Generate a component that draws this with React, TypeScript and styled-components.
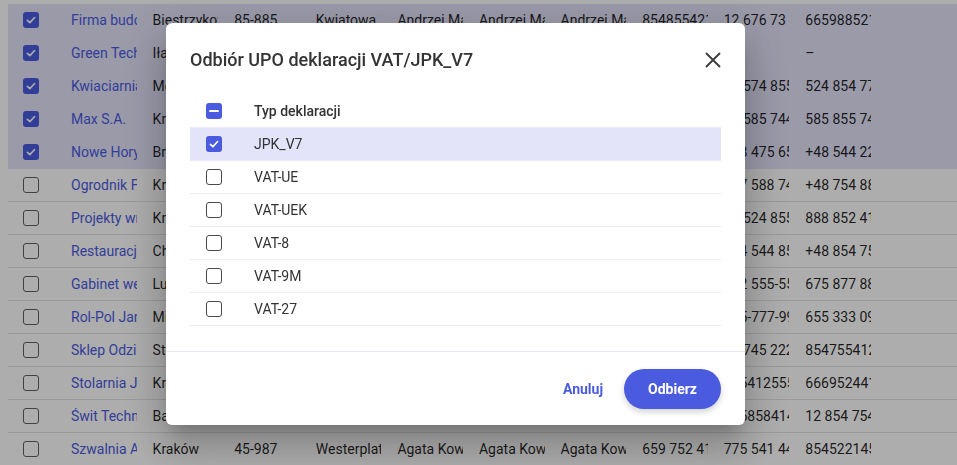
import styled, { createGlobalStyle } from "styled-components";

const primary = "#4b5be0";
const selectedBg = "#e3e3fa";

const GlobalStyle = createGlobalStyle`
  * {
    box-sizing: border-box;
  }

  body {
    margin: 0;
    background: #ffffff;
    font-family: Roboto, "Liberation Sans", Arial, sans-serif;
    color: rgba(0, 0, 0, 0.87);
  }
`;

type Company = {
  selected: boolean;
  name: string;
  city: string;
  zip: string;
  street: string;
  person: string;
  phone1: string;
  phone2: string;
  phone3: string;
};

const companies: Company[] = [
  { selected: true, name: "Firma budowlana", city: "Biestrzykowice", zip: "85-885", street: "Kwiatowa 15", person: "Andrzej Malinowski", phone1: "854855421", phone2: "12 676 73 22", phone3: "665988521" },
  { selected: true, name: "Green Tech", city: "Iława", zip: "14-200", street: "Leśna 4", person: "Marek Zieliński", phone1: "745 112 300", phone2: "–", phone3: "–" },
  { selected: true, name: "Kwiaciarnia Róża", city: "Mosina", zip: "62-050", street: "Polna 8", person: "Ewa Nowak", phone1: "612 455 871", phone2: "22 574 855 1", phone3: "524 854 771" },
  { selected: true, name: "Max S.A.", city: "Kraków", zip: "30-001", street: "Długa 21", person: "Piotr Wójcik", phone1: "585 744 120", phone2: "48 585 744 1", phone3: "585 855 741" },
  { selected: true, name: "Nowe Horyzonty", city: "Brzeg", zip: "49-300", street: "Opolska 3", person: "Anna Lis", phone1: "774 112 980", phone2: "+48 475 651", phone3: "+48 544 221" },
  { selected: false, name: "Ogrodnik Franciszek", city: "Kraków", zip: "31-222", street: "Ogrodowa 7", person: "Franciszek Mazur", phone1: "124 558 741", phone2: "627 588 741", phone3: "+48 754 881" },
  { selected: false, name: "Projekty wnętrz", city: "Kraków", zip: "30-410", street: "Zielona 2", person: "Olga Kruk", phone1: "126 524 851", phone2: "12 524 855", phone3: "888 852 411" },
  { selected: false, name: "Restauracja Smak", city: "Chełm", zip: "22-100", street: "Lwowska 11", person: "Jan Sowa", phone1: "825 544 851", phone2: "754 544 855", phone3: "+48 854 751" },
  { selected: false, name: "Gabinet weterynaryjny", city: "Lublin", zip: "20-001", street: "Krótka 5", person: "Maria Bąk", phone1: "815 555 552", phone2: "502 555-555", phone3: "675 877 881" },
  { selected: false, name: "Rol-Pol Jan Kowalski", city: "Mielec", zip: "39-300", street: "Polna 14", person: "Jan Kowalski", phone1: "177 777 999", phone2: "555-777-999", phone3: "655 333 091" },
  { selected: false, name: "Sklep Odzieżowy", city: "Starogard", zip: "83-200", street: "Rynek 9", person: "Ewa Kaczmarek", phone1: "585 745 221", phone2: "24 745 222", phone3: "854755412" },
  { selected: false, name: "Stolarnia Jan", city: "Kraków", zip: "31-540", street: "Tartaczna 6", person: "Jan Stolarz", phone1: "124 541 255", phone2: "585412555", phone3: "666952441" },
  { selected: false, name: "Świt Technologie", city: "Bartoszyce", zip: "11-200", street: "Słoneczna 1", person: "Adam Świt", phone1: "895 858 414", phone2: "665858414", phone3: "12 854 754" },
  { selected: false, name: "Szwalnia Anna", city: "Kraków", zip: "45-987", street: "Westerplatte 3", person: "Agata Kowalska", phone1: "659 752 411", phone2: "775 541 441", phone3: "854522145" },
];

const declarations = [
  { label: "JPK_V7", checked: true },
  { label: "VAT-UE", checked: false },
  { label: "VAT-UEK", checked: false },
  { label: "VAT-8", checked: false },
  { label: "VAT-9M", checked: false },
  { label: "VAT-27", checked: false },
];

/* background list */

const Page = styled.div`
  padding: 4px 0 0 8px;
`;

const TableRow = styled.div<{ $selected?: boolean }>`
  display: grid;
  grid-template-columns: 55px repeat(10, 81.6px) 1fr;
  align-items: center;
  height: 33px;
  font-size: 14px;
  background: ${(p) => (p.$selected ? selectedBg : "transparent")};
  border-bottom: 1px solid ${(p) => (p.$selected ? "transparent" : "#e2e2e2")};
`;

const CheckCell = styled.div`
  display: flex;
  align-items: center;
  padding-left: 15px;
`;

// margin instead of padding so the text is clipped 8px before the next column
const Cell = styled.div<{ $link?: boolean }>`
  margin: 0 8px;
  overflow: hidden;
  white-space: nowrap;
  color: ${(p) => (p.$link ? primary : "rgba(0, 0, 0, 0.87)")};
`;

/* checkbox */

const Box = styled.span<{ $on?: boolean; $strong?: boolean }>`
  display: inline-flex;
  align-items: center;
  justify-content: center;
  width: 16px;
  height: 16px;
  border-radius: 3px;
  background: ${(p) => (p.$on ? primary : "transparent")};
  border: ${(p) =>
    p.$on ? "none" : `1.5px solid ${p.$strong ? "#4a4a4a" : "#616161"}`};
`;

const Dash = styled.span`
  width: 10px;
  height: 2px;
  border-radius: 1px;
  background: #ffffff;
`;

type CheckState = "on" | "off" | "mixed";

const Checkbox = ({ state, strong }: { state: CheckState; strong?: boolean }) => (
  <Box $on={state !== "off"} $strong={strong}>
    {state === "on" && (
      <svg width="12" height="12" viewBox="0 0 12 12">
        <path
          d="M2.4 6.3 L4.9 8.6 L9.6 3.5"
          fill="none"
          stroke="#ffffff"
          strokeWidth="1.6"
          strokeLinecap="round"
          strokeLinejoin="round"
        />
      </svg>
    )}
    {state === "mixed" && <Dash />}
  </Box>
);

/* dialog */

const Backdrop = styled.div`
  position: fixed;
  inset: 0;
  background: rgba(0, 0, 0, 0.32);
  display: flex;
  align-items: flex-start;
  padding: 23px 0 0 166px;
`;

const Dialog = styled.div`
  width: 579px;
  height: 402px;
  background: #ffffff;
  border-radius: 6px;
  box-shadow: 0 11px 15px -7px rgba(0, 0, 0, 0.2), 0 24px 38px 3px rgba(0, 0, 0, 0.14),
    0 9px 46px 8px rgba(0, 0, 0, 0.12);
  display: flex;
  flex-direction: column;
`;

const DialogHeader = styled.div`
  display: flex;
  align-items: center;
  justify-content: space-between;
  padding: 24px 24px 0;
`;

const Title = styled.h2`
  margin: 0;
  font-size: 18px;
  line-height: 26px;
  font-weight: 500;
  color: #333333;
`;

const CloseButton = styled.button`
  display: flex;
  align-items: center;
  justify-content: center;
  width: 20px;
  height: 20px;
  padding: 0;
  margin-right: -2px;
  border: none;
  background: none;
  cursor: pointer;
`;

const DialogBody = styled.div`
  flex: 1;
  padding: 22px 24px 0;
`;

const DeclRow = styled.div<{ $selected?: boolean; $head?: boolean }>`
  display: grid;
  grid-template-columns: 64px 1fr;
  align-items: center;
  height: 33px;
  font-size: 14px;
  font-weight: ${(p) => (p.$head ? 500 : 400)};
  color: #333333;
  background: ${(p) => (p.$selected ? selectedBg : "transparent")};
  border-bottom: 1px solid #ececf9;
`;

const DeclCheck = styled.div`
  display: flex;
  padding-left: 16px;
`;

const DialogFooter = styled.div`
  display: flex;
  align-items: center;
  justify-content: flex-end;
  gap: 21px;
  height: 74px;
  padding: 0 24px;
  border-top: 1px solid #e6e6f7;
`;

const TextButton = styled.button`
  padding: 0;
  border: none;
  background: none;
  font-family: inherit;
  font-size: 14px;
  font-weight: 700;
  color: ${primary};
  cursor: pointer;
`;

const PillButton = styled.button`
  height: 40px;
  padding: 0 24px;
  border: none;
  border-radius: 20px;
  background: ${primary};
  color: #ffffff;
  font-family: inherit;
  font-size: 14px;
  font-weight: 700;
  box-shadow: 0 3px 6px rgba(0, 0, 0, 0.18);
  cursor: pointer;
`;

const App = () => {
  return (
    <>
      <GlobalStyle />
      <Page>
        {companies.map((c) => (
          <TableRow key={c.name} $selected={c.selected}>
            <CheckCell>
              <Checkbox state={c.selected ? "on" : "off"} />
            </CheckCell>
            <Cell $link>{c.name}</Cell>
            <Cell>{c.city}</Cell>
            <Cell>{c.zip}</Cell>
            <Cell>{c.street}</Cell>
            <Cell>{c.person}</Cell>
            <Cell>{c.person}</Cell>
            <Cell>{c.person}</Cell>
            <Cell>{c.phone1}</Cell>
            <Cell>{c.phone2}</Cell>
            <Cell>{c.phone3}</Cell>
            <Cell />
          </TableRow>
        ))}
      </Page>

      <Backdrop>
        <Dialog>
          <DialogHeader>
            <Title>Odbiór UPO deklaracji VAT/JPK_V7</Title>
            <CloseButton aria-label="Zamknij">
              <svg width="16" height="16" viewBox="0 0 16 16">
                <path
                  d="M1.5 1.5 L14.5 14.5 M14.5 1.5 L1.5 14.5"
                  stroke="#3d3d3d"
                  strokeWidth="1.9"
                  strokeLinecap="round"
                />
              </svg>
            </CloseButton>
          </DialogHeader>
          <DialogBody>
            <DeclRow $head>
              <DeclCheck>
                <Checkbox state="mixed" />
              </DeclCheck>
              <span>Typ deklaracji</span>
            </DeclRow>
            {declarations.map((d) => (
              <DeclRow key={d.label} $selected={d.checked}>
                <DeclCheck>
                  <Checkbox state={d.checked ? "on" : "off"} strong />
                </DeclCheck>
                <span>{d.label}</span>
              </DeclRow>
            ))}
          </DialogBody>
          <DialogFooter>
            <TextButton>Anuluj</TextButton>
            <PillButton>Odbierz</PillButton>
          </DialogFooter>
        </Dialog>
      </Backdrop>
    </>
  );
};

export default App;
